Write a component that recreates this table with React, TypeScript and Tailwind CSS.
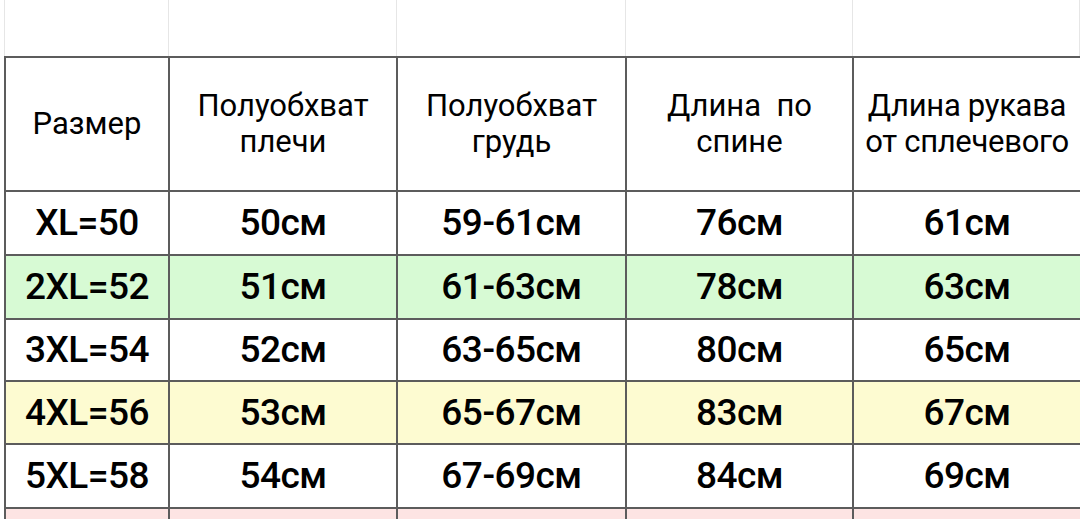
import React from "react";

type Row = { size: string; shoulder: string; chest: string; back: string; sleeve: string; bg: string; h: string };

const rows: Row[] = [
  { size: "XL=50", shoulder: "50см", chest: "59-61см", back: "76см", sleeve: "61см", bg: "bg-white", h: "h-[64px]" },
  { size: "2XL=52", shoulder: "51см", chest: "61-63см", back: "78см", sleeve: "63см", bg: "bg-[#d7fad4]", h: "h-[64px]" },
  { size: "3XL=54", shoulder: "52см", chest: "63-65см", back: "80см", sleeve: "65см", bg: "bg-white", h: "h-[62px]" },
  { size: "4XL=56", shoulder: "53см", chest: "65-67см", back: "83см", sleeve: "67см", bg: "bg-[#fdfbd1]", h: "h-[63px]" },
  { size: "5XL=58", shoulder: "54см", chest: "67-69см", back: "84см", sleeve: "69см", bg: "bg-white", h: "h-[64px]" },
  { size: "", shoulder: "", chest: "", back: "", sleeve: "", bg: "bg-[#fde4e3]", h: "h-[40px]" },
];

const cols = "grid grid-cols-[164px_228px_229px_227px_228px]";
const cell = "flex items-center justify-center border-r-2 border-b-2 border-[#5c5c5c] text-center";

export default function App() {
  return (
    <div className="w-[1080px] h-[519px] overflow-hidden bg-white text-black font-['Roboto','Liberation_Sans',sans-serif]">
      <div className={`${cols} h-[56px] ml-[4px]`}>
        {[0, 1, 2, 3, 4].map((i) => (
          <div key={i} className="border-l border-[#e6e6e6] last:border-r" />
        ))}
      </div>

      <div className="ml-[4px] border-t-2 border-l-2 border-[#5c5c5c]">
        <div className={`${cols} h-[134px] text-[31px] leading-[36px] font-normal`}>
          <div className={cell}>Размер</div>
          <div className={cell}>Полуобхват<br />плечи</div>
          <div className={cell}>Полуобхват<br />грудь</div>
          <div className={cell}>Длина&nbsp; по<br />спине</div>
          <div className={`${cell} whitespace-nowrap tracking-[-0.3px]`}>Длина рукава<br />от сплечевого</div>
        </div>

        {rows.map((r, i) => (
          <div key={i} className={`${cols} ${r.h} ${r.bg} text-[37px] font-medium tracking-[-0.5px]`}>
            <div className={cell}>{r.size}</div>
            <div className={cell}>{r.shoulder}</div>
            <div className={cell}>{r.chest}</div>
            <div className={cell}>{r.back}</div>
            <div className={cell}>{r.sleeve}</div>
          </div>
        ))}
      </div>
    </div>
  );
}
